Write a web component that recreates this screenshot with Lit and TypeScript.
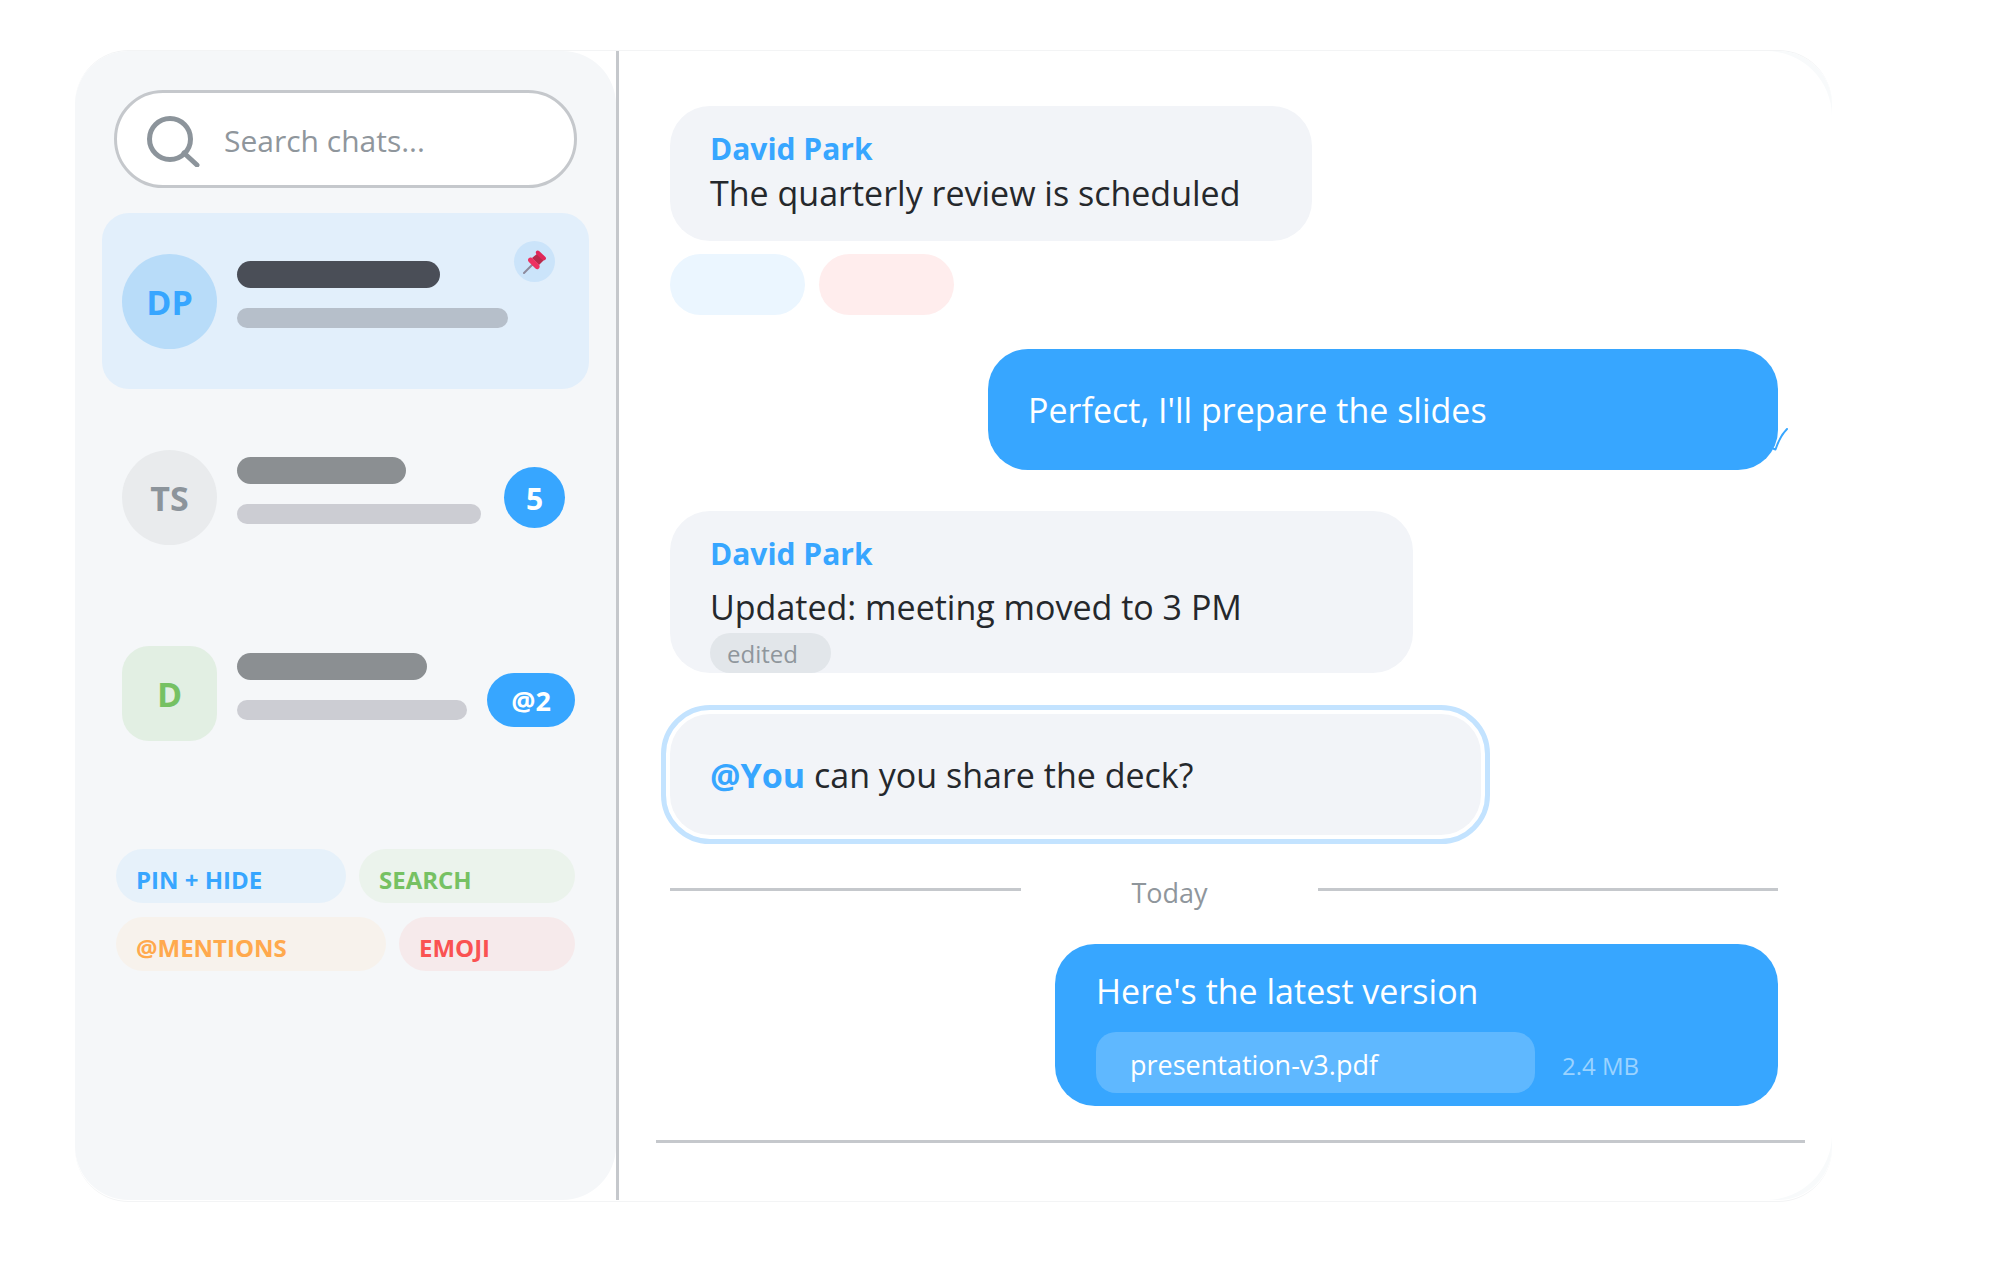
import { LitElement, html, css, svg, nothing } from "lit";
import { customElement, state } from "lit/decorators.js";
import { classMap } from "lit/directives/class-map.js";
import { styleMap } from "lit/directives/style-map.js";

interface Chat {
  id: string;
  initials: string;
  tone: "blue" | "grey" | "green";
  title: number;
  preview: number;
  pinned?: boolean;
  badge?: string;
  mention?: boolean;
}

const CHATS: Chat[] = [
  { id: "david", initials: "DP", tone: "blue", title: 203, preview: 271, pinned: true },
  { id: "team", initials: "TS", tone: "grey", title: 169, preview: 244, badge: "5" },
  { id: "design", initials: "D", tone: "green", title: 190, preview: 230, badge: "@2", mention: true },
];

const TAGS = [
  [
    { label: "PIN + HIDE", tone: "blue", basis: 230 },
    { label: "SEARCH", tone: "green", basis: 216 },
  ],
  [
    { label: "@MENTIONS", tone: "orange", basis: 270 },
    { label: "EMOJI", tone: "red", basis: 176 },
  ],
];

const pinIcon = svg`
  <svg class="pin-icon" viewBox="0 0 24 24" aria-hidden="true">
    <path d="M1 23 9.500 14.500" stroke="#8d8a9c" stroke-width="2" stroke-linecap="round" />
    <path d="M9 8 15 3 21 10 16 15Z" fill="#b92a4c" />
    <path d="M13 1.500c.8-1.400 2.300-1.300 3.400-.3l5.800 5.600c1.100 1.100 1.200 2.500-.2 3.200-1.200.6-2.400.2-3.400-.7l-4.900-4.800c-.9-.9-1.200-2-.7-3Z" fill="#e0285a" />
    <path d="M5.200 9c.9-1.600 3-2.100 4.600-.6l5.900 5.800c1.500 1.500 1.300 3.800-.4 4.700-1.100.6-2.200.2-3.100-.7l-6.300-6.200c-.9-.9-1.200-2-.7-3Z" fill="#ee3162" />
  </svg>`;

@customElement("chat-sidebar")
export class ChatSidebar extends LitElement {
  @state() private active = "david";

  static styles = css`
    :host {
      display: block;
      box-sizing: border-box;
      padding: 39px 27px 40px;
      border-radius: 54px;
      background: #f5f7f9;
    }
    * {
      box-sizing: border-box;
    }
    .search {
      display: flex;
      align-items: center;
      gap: 23px;
      height: 98px;
      margin: 0 12px 25px;
      padding: 0 28px;
      border: 3px solid #c5c8cc;
      border-radius: 49px;
      background: #fff;
    }
    .search-icon {
      flex: none;
      width: 56px;
      height: 56px;
      fill: none;
      stroke: #8c949b;
      stroke-width: 5;
      stroke-linecap: round;
    }
    .search-input {
      flex: 1;
      min-width: 0;
      padding: 4px 0 0;
      border: 0;
      outline: 0;
      background: none;
      font: 30px/44px "Open Sans", sans-serif;
      color: #8f969c;
    }
    .search-input::placeholder {
      color: #8f969c;
      opacity: 1;
    }
    .chats {
      display: flex;
      flex-direction: column;
      gap: 20px;
      margin: 0;
      padding: 0;
      list-style: none;
    }
    .chat {
      position: relative;
      display: flex;
      align-items: center;
      gap: 20px;
      height: 176px;
      padding: 0 20px;
      border-radius: 27px;
      text-decoration: none;
    }
    .chat.active {
      background: #e2effb;
    }
    .avatar {
      flex: none;
      width: 95px;
      height: 95px;
      border-radius: 50%;
      font-size: 34px;
      line-height: 97px;
      font-weight: 700;
      text-align: center;
    }
    .avatar.blue {
      background: #b8dcf9;
      color: #37a6ff;
    }
    .avatar.grey {
      background: #e9ebed;
      color: #8c949b;
    }
    .avatar.green {
      border-radius: 27px;
      background: #e2efe3;
      color: #76c163;
    }
    .lines {
      display: flex;
      flex-direction: column;
      gap: 20px;
      padding-bottom: 13px;
    }
    .title {
      height: 27px;
      border-radius: 14px;
      background: #8b8f92;
    }
    .preview {
      height: 20px;
      border-radius: 10px;
      background: #cccdd3;
    }
    .active .title {
      background: #4a4e57;
    }
    .active .preview {
      background: #b6bfca;
    }
    .pin {
      position: absolute;
      top: 28px;
      right: 34px;
      display: grid;
      place-items: center;
      width: 41px;
      height: 41px;
      border-radius: 50%;
      background: #cbe4fa;
    }
    .pin-icon {
      width: 24px;
      height: 24px;
      fill: none;
    }
    .badge {
      position: absolute;
      top: 58px;
      right: 24px;
      width: 61px;
      height: 61px;
      border-radius: 31px;
      background: #37a6ff;
      color: #fff;
      font-size: 30px;
      line-height: 63px;
      font-weight: 700;
      text-align: center;
    }
    .badge.mention {
      top: 68px;
      right: 14px;
      width: 88px;
      height: 54px;
      font-size: 27px;
      line-height: 56px;
    }
    .tags {
      display: flex;
      flex-direction: column;
      gap: 14px;
      margin: 68px 14px 0;
    }
    .tag-row {
      display: flex;
      gap: 13px;
    }
    .tag {
      flex: 1 1 auto;
      height: 54px;
      padding: 8px 20px 0;
      border: 0;
      border-radius: 27px;
      font: 700 24px/46px "Open Sans", sans-serif;
      text-align: left;
      white-space: nowrap;
    }
    .tag.blue {
      background: #e6f1fa;
      color: #37a6ff;
    }
    .tag.green {
      background: #ebf3ec;
      color: #76c163;
    }
    .tag.orange {
      background: #f7f2ec;
      color: #ffa94d;
    }
    .tag.red {
      background: #f6eaeb;
      color: #fa5252;
    }
  `;

  private renderChat(chat: Chat) {
    return html`<li>
      <a
        class=${classMap({ chat: true, active: chat.id === this.active })}
        href="#${chat.id}"
        @click=${() => (this.active = chat.id)}
      >
        <span class="avatar ${chat.tone}">${chat.initials}</span>
        <span class="lines">
          <span class="title" style=${styleMap({ width: `${chat.title}px` })}></span>
          <span class="preview" style=${styleMap({ width: `${chat.preview}px` })}></span>
        </span>
        ${chat.pinned ? html`<span class="pin">${pinIcon}</span>` : nothing}
        ${chat.badge
          ? html`<span class=${classMap({ badge: true, mention: !!chat.mention })}>${chat.badge}</span>`
          : nothing}
      </a>
    </li>`;
  }

  render() {
    return html`
      <label class="search">
        <svg class="search-icon" viewBox="0 0 56 56" aria-hidden="true">
          <circle cx="25" cy="28" r="20.500" />
          <path d="M39 42 52 54" />
        </svg>
        <input class="search-input" type="search" placeholder="Search chats..." aria-label="Search chats" />
      </label>
      <ul class="chats">
        ${CHATS.map((chat) => this.renderChat(chat))}
      </ul>
      <div class="tags">
        ${TAGS.map(
          (row) => html`<div class="tag-row">
            ${row.map(
              (tag) => html`<button
                class="tag ${tag.tone}"
                type="button"
                style=${styleMap({ flexBasis: `${tag.basis}px` })}
              >${tag.label}</button>`
            )}
          </div>`
        )}
      </div>
    `;
  }
}

@customElement("chat-thread")
export class ChatThread extends LitElement {
  static styles = css`
    :host {
      display: flex;
      flex-direction: column;
      box-sizing: border-box;
      padding: 55px 27px 57px 37px;
      font-size: 34px;
      line-height: 45px;
      color: #25282c;
    }
    * {
      box-sizing: border-box;
    }
    p {
      margin: 0;
    }
    .messages {
      display: flex;
      flex-direction: column;
      align-items: flex-start;
      padding: 0 27px 34px 14px;
    }
    .bubble {
      position: relative;
      max-width: 100%;
      padding: 20px 40px 0;
      border-radius: 40px;
      background: #f2f4f8;
    }
    .bubble.single {
      display: flex;
      align-items: center;
      min-height: 121px;
      padding: 2px 40px 0;
    }
    .bubble.own {
      align-self: flex-end;
      background: #37a6ff;
      color: #fff;
    }
    .review {
      width: 642px;
      min-height: 135px;
    }
    .slides {
      width: 790px;
      margin-top: 34px;
    }
    .update {
      width: 743px;
      margin-top: 41px;
    }
    .deck {
      width: 811px;
      margin-top: 41px;
      outline: 5px solid #c3e3ff;
      outline-offset: 4px;
    }
    .bubble.latest {
      width: 723px;
      margin-top: 31px;
      padding: 25px 41px 13px;
    }
    .author {
      font-size: 30px;
      font-weight: 700;
      color: #37a6ff;
    }
    .update .author {
      margin-bottom: 9px;
    }
    .edited {
      display: block;
      width: 121px;
      height: 40px;
      margin-top: 3px;
      padding-left: 17px;
      border-radius: 20px;
      background: #e2e6ea;
      color: #8f969c;
      font-size: 24px;
      line-height: 42px;
    }
    .at {
      font-weight: 700;
      color: #37a6ff;
    }
    .reactions {
      display: flex;
      gap: 14px;
      margin-top: 13px;
    }
    .reaction {
      width: 135px;
      height: 61px;
      border: 0;
      border-radius: 31px;
      background: #ebf6ff;
    }
    .reaction.love {
      background: #ffeded;
    }
    .check {
      position: absolute;
      right: -11px;
      bottom: 18px;
      width: 20px;
      height: 26px;
      fill: none;
      stroke: #37a6ff;
      stroke-width: 2;
      stroke-linecap: round;
      stroke-linejoin: round;
    }
    .day {
      display: grid;
      grid-template-columns: 351fr 297px 460fr;
      align-items: center;
      align-self: stretch;
      margin-top: 30px;
      font-size: 27px;
      line-height: 40px;
      text-align: center;
      color: #8f969c;
    }
    .day time {
      padding-top: 8px;
    }
    .rule {
      width: 100%;
      height: 3px;
      margin: 0;
      border: 0;
      background: #c5c8cc;
    }
    .file-row {
      display: flex;
      align-items: baseline;
      gap: 27px;
      margin-top: 18px;
    }
    .file {
      flex: 0 1 439px;
      height: 61px;
      padding: 5px 34px 0;
      border-radius: 20px;
      background: #5fb8ff;
      color: #fff;
      font-size: 27px;
      line-height: 56px;
      text-decoration: none;
    }
    .size {
      color: #9bd3ff;
      font-size: 24px;
      white-space: nowrap;
    }
  `;

  render() {
    return html`
      <div class="messages">
        <article class="bubble review">
          <p class="author">David Park</p>
          <p>The quarterly review is scheduled</p>
        </article>
        <div class="reactions">
          <button class="reaction" type="button" aria-label="Like"></button>
          <button class="reaction love" type="button" aria-label="Love"></button>
        </div>
        <article class="bubble single own slides">
          <p>Perfect, I'll prepare the slides</p>
          <svg class="check" viewBox="0 0 20 26" aria-hidden="true">
            <path d="M4 22.500 6.500 23.500C9.500 14.500 13 8 18 3" />
          </svg>
        </article>
        <article class="bubble update">
          <p class="author">David Park</p>
          <p>Updated: meeting moved to 3 PM</p>
          <span class="edited">edited</span>
        </article>
        <article class="bubble single deck">
          <p><span class="at">@You</span> can you share the deck?</p>
        </article>
        <div class="day">
          <hr class="rule" />
          <time>Today</time>
          <hr class="rule" />
        </div>
        <article class="bubble own latest">
          <p>Here's the latest version</p>
          <div class="file-row">
            <a class="file" href="#presentation-v3.pdf">presentation-v3.pdf</a>
            <span class="size">2.4 MB</span>
          </div>
        </article>
      </div>
      <hr class="rule" />
    `;
  }
}

@customElement("app-root")
export class AppRoot extends LitElement {
  static styles = css`
    :host {
      display: block;
      padding: 50px 168px 67px 75px;
      background: #fff;
      font-family: "Open Sans", sans-serif;
    }
    .window {
      display: grid;
      grid-template-columns: 541px 3px 1fr;
      padding-bottom: 1px;
      border-top: 1px solid #f3f4f5;
      border-bottom: 1px solid #f3f4f5;
      border-radius: 54px;
    }
    .divider {
      background: #c5c8cc;
    }
    .panel {
      border-radius: 0 54px 54px 0;
      background: #f8fafb;
    }
    .thread {
      border-radius: 0 66px 66px 0;
      background: #fff;
    }
  `;

  render() {
    return html`
      <main class="window">
        <chat-sidebar></chat-sidebar>
        <div class="divider"></div>
        <div class="panel">
          <chat-thread class="thread"></chat-thread>
        </div>
      </main>
    `;
  }
}
